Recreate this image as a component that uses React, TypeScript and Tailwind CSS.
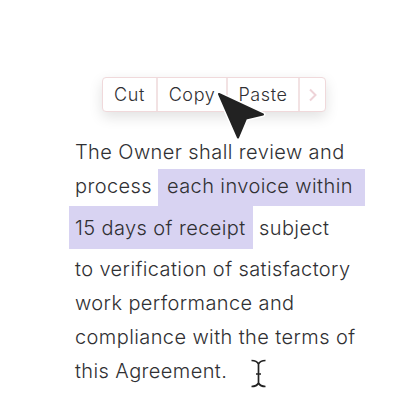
export default function App() {
  const line = "h-[34px] flex items-center";
  return (
    <div className="relative w-[406px] h-[406px] bg-white overflow-hidden text-[#303033] font-['Inter',sans-serif] font-light text-[20px] tracking-[0.4px]">
      <div className="pt-[77px] pl-[102px]">
        <div className="flex w-[224px] h-[35px] rounded-[4px] border border-[#f0d9db] bg-white shadow-[0_5px_14px_rgba(0,0,0,0.12)] text-[18px] tracking-[0.6px] items-stretch">
          <div className="w-[55px] flex items-center justify-center border-r-2 border-[#f2e2e3]">Cut</div>
          <div className="w-[70px] flex items-center justify-center border-r-2 border-[#f2e2e3]">Copy</div>
          <div className="w-[72px] flex items-center justify-center border-r-2 border-[#f2e2e3]">Paste</div>
          <div className="flex-1 flex items-center justify-center">
            <svg width="10" height="14" viewBox="0 0 10 14" fill="none" stroke="#eed3d8" strokeWidth="2"><path d="M2 1.500l5.500 5.500L2 12.500" /></svg>
          </div>
        </div>
      </div>
      <div className="pt-[23px] pl-[75px]">
        <div className={line}>The Owner shall review and</div>
        <div className="flex h-[37px] items-center">
          <span className="w-[83px] pb-[3px]">process</span>
          <span className="h-full w-[207px] pl-[9px] pb-[3px] flex items-center bg-[#d8d3f2]">each invoice within</span>
        </div>
        <div className="flex h-[43px] items-center -ml-[6px]">
          <span className="h-full w-[184px] pl-[6px] flex items-center bg-[#d8d3f2]">15 days of receipt</span>
          <span className="ml-[6px]">subject</span>
        </div>
        <div className={`${line} mt-[3px]`}>to verification of satisfactory</div>
        <div className={line}>work performance and</div>
        <div className={line}>compliance with the terms of</div>
        <div className={line}>this Agreement.</div>
      </div>
      <svg className="absolute left-[210px] top-[85px]" width="62" height="62" viewBox="210 85 62 62">
        <path d="M219 94L263 114.500L246 118.500L238 137.500Z" fill="#222" stroke="#fff" strokeWidth="5" strokeLinejoin="round" />
        <path d="M219 94L263 114.500L246 118.500L238 137.500Z" fill="#222" stroke="#222" strokeWidth="2" strokeLinejoin="round" />
      </svg>
      <svg className="absolute left-[250px] top-[358px]" width="18" height="31" viewBox="250 358 18 31" fill="none" stroke="#222" strokeWidth="1.700">
        <path d="M251.500 360.500c3.500 0 6 1.500 7 3.500c1-2 3.500-3.500 7-3.500M258.500 364v19M251.500 386.500c3.500 0 6-1.500 7-3.500c1 2 3.500 3.500 7 3.500M256 374h5" />
      </svg>
    </div>
  );
}
